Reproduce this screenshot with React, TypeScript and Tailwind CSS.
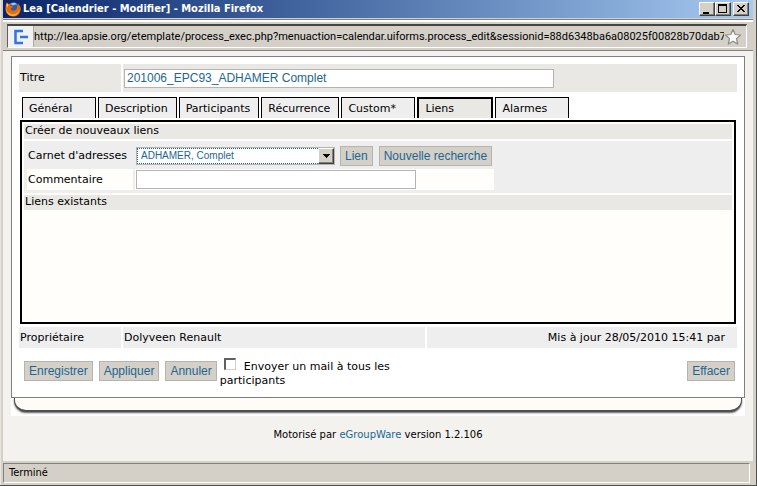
import { useState } from "react";
import type { ReactNode } from "react";

const tabs = ["Général", "Description", "Participants", "Récurrence", "Custom*", "Liens", "Alarmes"];

function FirefoxLogo() {
  return (
    <svg viewBox="0 0 16 16" className="size-4 shrink-0" aria-hidden="true">
      <circle cx="8.5" cy="7.5" r="6.3" fill="#2d5f9e" />
      <path d="M6 2.5c2-1.3 5-.8 6 1.2-1.400-.5-2 .5-3.500.6S6.300 4 6 2.500z" fill="#9cc7ea" />
      <path
        d="M1.500 1.500c.8.2 1.500.8 2 1.500 1-.4 2-.4 3 0-.8.500-1.200 1.200-1.100 2 1 .2 2 .3 2.500.8-.2 1-1.900 1.200-2.200 2.200.5 1.800 3 2.300 5 .8 1.700-1.300 1.800-3.300.8-5.300 1.100.5 1.700 1.200 2 2 .1-1-.3-2.400-1-3.300 2 1.200 3.200 3.300 3.200 5.700 0 4.300-3.300 7.600-7.600 7.600S.5 12.200.5 8c0-2.400.3-4.700 1-6.500z"
        fill="#e66a13"
      />
      <path d="M1.200 6.500c.3 4.500 3.300 6.800 6.700 6.800 3.200 0 5.700-2 6.500-5-.3 4-3 6.700-6.500 6.700-4 0-7.300-3.300-6.700-8.500z" fill="#f9b62c" />
      <path d="M2 2.500c1 .6 1.300 1.200 1.300 2.200-.8.500-1.100 1.300-1.100 2.300C1.300 5.500 1.500 4 2 2.500z" fill="#ffd75e" />
    </svg>
  );
}

function CaptionButton({ label, children }: { label: string; children: ReactNode }) {
  return (
    <button
      type="button"
      aria-label={label}
      className="h-[14px] w-4 border border-t-white border-l-white border-r-[#404040] border-b-[#404040] bg-[#d4d0c8] shadow-[inset_-1px_-1px_0_#808080]"
    >
      <svg viewBox="0 0 14 12" className="h-3 w-[14px]" shapeRendering="crispEdges">
        {children}
      </svg>
    </button>
  );
}

function ActionButton({ children }: { children: ReactNode }) {
  return (
    <button
      type="button"
      className="block h-5 border border-[#b4b4b0] bg-[#d4d0c8] px-1 font-['Liberation_Sans',Arial,sans-serif] text-[12px] leading-[18px] whitespace-nowrap text-[#1d6694]"
    >
      {children}
    </button>
  );
}

export default function App() {
  const [active, setActive] = useState("Liens");

  return (
    <div className="flex min-h-screen flex-col border-r border-b border-[#505050] bg-[#d4d0c8] pr-[3px] font-['DejaVu_Sans',Verdana,sans-serif] text-[11px] leading-[14px] text-black">
      <div className="flex flex-1 flex-col border-l border-[#e8e6e0] pl-[2px]">
        <header className="flex h-[18px] items-center justify-between bg-linear-to-r from-[#0a246a] to-[#a6caf0] pr-1 pl-[2px]">
          <div className="flex items-center gap-[2px] font-['DejaVu_Sans_Condensed','DejaVu_Sans',Tahoma,sans-serif] text-[11px] font-bold text-white">
            <FirefoxLogo />
            <h1 className="whitespace-nowrap">Lea [Calendrier - Modifier] - Mozilla Firefox</h1>
          </div>
          <div className="flex">
            <CaptionButton label="Réduire">
              <path d="M3 9h6v2H3z" />
            </CaptionButton>
            <CaptionButton label="Agrandir">
              <path d="M2 1h9v9H2zM3 3v6h7V3z" fillRule="evenodd" />
            </CaptionButton>
            <span className="w-[2px]" />
            <CaptionButton label="Fermer">
              <path d="M3 2h2v1h1v1h2V3h1V2h2v1h-1v1H9v1H8v1h1v1h1v1h1v1H9V8H8V7H6v1H5v1H3V8h1V7h1V6h1V5H5V4H4V3H3z" />
            </CaptionButton>
          </div>
        </header>

        <div className="mt-px border-t border-b border-t-[#808080] border-b-[#808080]">
          <div className="border-t-2 border-t-white pt-[2px] pr-[6px] pb-[2px] pl-1">
            <div className="flex h-6 items-center border border-t-2 border-t-[#45453f] border-l-[#606060] border-r-white border-b-white">
              <div className="flex h-full w-[26px] items-center justify-center border-r border-[#b0aca4] bg-[#f1f1f1]">
                <svg viewBox="0 0 16 16" className="size-4" fill="none" stroke="#2f74e8" strokeWidth="2.500" aria-hidden="true">
                  <path d="M10 2H2.500v12H10" />
                  <path d="M7 8h8" />
                </svg>
              </div>
              <input
                aria-label="Adresse"
                readOnly
                value="http://lea.apsie.org/etemplate/process_exec.php?menuaction=calendar.uiforms.process_edit&sessionid=88d6348ba6a08025f00828b70dab7"
                className="h-5 min-w-0 flex-1 bg-transparent font-[Roboto,Tahoma,sans-serif] text-[11px] outline-none"
              />
              <svg viewBox="0 0 18 18" className="mr-1 size-[18px] shrink-0" aria-hidden="true">
                <path
                  d="M9 1.500l2.200 5 5.300.5-4 3.600 1.200 5.400L9 13.300 4.300 16l1.200-5.400-4-3.600 5.300-.5z"
                  fill="#f8f8f8"
                  stroke="#8b8b88"
                  strokeWidth="1.200"
                  strokeLinejoin="round"
                />
              </svg>
            </div>
          </div>
        </div>

        <main className="flex-1 bg-[#f3f2ee] pt-[5px] pr-2 pl-2">
          <form onSubmit={(e) => e.preventDefault()}>
            <div className="border border-[#808080] bg-white px-[7px] pt-[7px] pb-[9px]">
              <div className="grid grid-cols-[102px_1fr] gap-[2px]">
                <label htmlFor="titre" className="flex h-7 items-center bg-[#eae8e4] px-px">
                  Titre
                </label>
                <div className="flex h-7 items-center bg-[#eae8e4] px-px">
                  <input
                    id="titre"
                    defaultValue="201006_EPC93_ADHAMER Complet"
                    className="h-[19px] w-[430px] border border-[#b4b4b4] bg-white px-[2px] font-['Liberation_Sans',Arial,sans-serif] text-[12px] text-[#1d6694]"
                  />
                </div>
              </div>

              <div role="tablist" className="mt-[5px] flex gap-[2px] pl-[3px]">
                {tabs.map((tab) => (
                  <button
                    key={tab}
                    type="button"
                    role="tab"
                    aria-selected={tab === active}
                    onClick={() => setActive(tab)}
                    className={
                      tab === active
                        ? "h-[21px] min-w-[76px] border-2 border-b-0 border-black bg-[#eae8e4] pt-px pr-2 pl-[6px] text-left"
                        : "h-[21px] min-w-[74px] border border-b-0 border-black bg-[#eeeeee] pt-[2px] pr-2 pl-[6px] text-left"
                    }
                  >
                    {tab}
                  </button>
                ))}
              </div>

              <section role="tabpanel" aria-label={active} className="mx-px mt-[2px] h-[204px] border-2 border-black bg-[#fffefa] p-[2px]">
                <h2 className="h-[15px] bg-[#eae8e4] px-px">Créer de nouveaux liens</h2>
                <div className="my-[2px] h-[52px] bg-[#eeeeee] px-[3px] pt-1">
                  <div className="flex h-[21px] items-center">
                    <label htmlFor="carnet" className="w-[108px] pl-px whitespace-nowrap">
                      Carnet d'adresses
                    </label>
                    <div className="relative ml-px w-[199px]">
                      <select
                        id="carnet"
                        className="block h-[18px] w-full appearance-none border border-[#b4b4b4] bg-white pl-1 font-['Liberation_Sans',Arial,sans-serif] text-[10px] text-[#1d6694] outline-1 -outline-offset-2 outline-dotted outline-[#1d6694]"
                      >
                        <option>ADHAMER, Complet</option>
                      </select>
                      <span className="pointer-events-none absolute inset-y-px right-px flex w-4 items-center justify-center border border-t-white border-l-white border-r-[#404040] border-b-[#404040] bg-[#d4d0c8] shadow-[inset_-1px_-1px_0_#808080]">
                        <svg viewBox="0 0 7 4" className="h-1 w-[7px]" shapeRendering="crispEdges">
                          <path d="M0 0h7v1H6v1H5v1H4v1H3V3H2V2H1V1H0z" />
                        </svg>
                      </span>
                    </div>
                    <div className="ml-[5px] flex gap-[6px]">
                      <ActionButton>Lien</ActionButton>
                      <ActionButton>Nouvelle recherche</ActionButton>
                    </div>
                  </div>
                  <div className="mt-[3px] grid h-[21px] w-[467px] grid-cols-[106px_1fr] items-center gap-[2px]">
                    <label htmlFor="commentaire" className="flex h-full items-center bg-[#fffefa] pl-px">
                      Commentaire
                    </label>
                    <div className="flex h-full items-center bg-[#fffefa] pl-px">
                      <input
                        id="commentaire"
                        className="h-[19px] w-[280px] border border-[#b4b4b4] bg-white px-[2px] font-['Liberation_Sans',Arial,sans-serif] text-[12px] text-[#1d6694]"
                      />
                    </div>
                  </div>
                </div>
                <h2 className="h-[15px] bg-[#eae8e4] px-px">Liens existants</h2>
              </section>

              <dl className="mt-[3px] grid h-[21px] grid-cols-[102px_302fr_310fr] gap-[2px] [&>*]:flex [&>*]:items-center [&>*]:bg-[#eeeeee] [&>*]:px-px">
                <dt>Propriétaire</dt>
                <dd>Dolyveen Renault</dd>
                <dd>
                  <span className="ml-auto pr-[11px]">Mis à jour 28/05/2010 15:41 par</span>
                </dd>
              </dl>

              <div className="mt-[10px] flex items-start pr-[2px] pl-[5px]">
                <div className="flex gap-[6px] pt-[3px]">
                  <ActionButton>Enregistrer</ActionButton>
                  <ActionButton>Appliquer</ActionButton>
                  <ActionButton>Annuler</ActionButton>
                </div>
                <label className="ml-[3px] w-[200px]">
                  <input
                    type="checkbox"
                    className="mr-2 ml-1 size-3 appearance-none border border-t-2 border-l-2 border-t-[#606060] border-l-[#606060] border-r-[#d4d0c8] border-b-[#d4d0c8] bg-white align-baseline checked:bg-[#1d6694]"
                  />
                  Envoyer un mail à tous les participants
                </label>
                <div className="ml-auto pt-[3px]">
                  <ActionButton>Effacer</ActionButton>
                </div>
              </div>
            </div>
          </form>
          <div className="h-[18px] bg-white px-[3px]">
            <div className="h-[14px] rounded-b-[12px] border-x border-b-2 border-[#4c5050] bg-[#fffcf8] shadow-[0_1px_2px_#606060]" />
          </div>
          <footer className="pt-3 text-center text-[10px] leading-[14px]">
            Motorisé par{" "}
            <a href="#egroupware" className="text-[#1d6694]">
              eGroupWare
            </a>{" "}
            version 1.2.106
          </footer>
        </main>

        <div className="pt-[2px] pr-[3px] pb-[2px]">
          <div
            role="status"
            className="h-5 border border-t-[#808080] border-l-[#808080] border-r-white border-b-white pl-[5px] font-['DejaVu_Sans_Condensed','DejaVu_Sans',Tahoma,sans-serif] leading-[18px]"
          >
            Terminé
          </div>
        </div>
      </div>
    </div>
  );
}
